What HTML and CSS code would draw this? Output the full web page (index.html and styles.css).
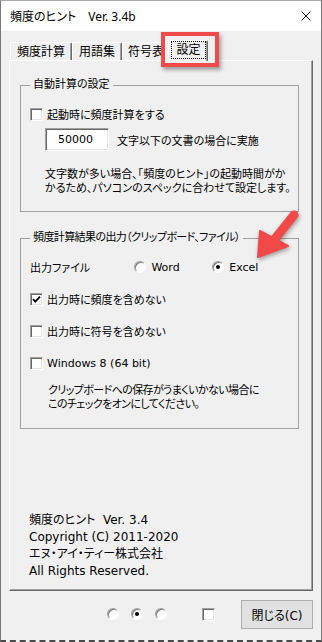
FILE: index.html
```html
<!DOCTYPE html>
<html lang="ja">
<head>
<meta charset="utf-8">
<title>頻度のヒント</title>
<link rel="stylesheet" href="styles.css">
</head>
<body>
<div class="window">
  <header class="titlebar">
    <span class="app-name">頻度のヒント</span><span class="app-ver">Ver. 3.4b</span>
    <svg class="close" width="10" height="10" viewBox="0 0 10 10"><path d="M0.5 0.5 L9.5 9.5 M9.5 0.5 L0.5 9.5" stroke="#111" stroke-width="1" fill="none"/></svg>
  </header>
  <main class="client">
    <nav class="tabs">
      <span class="tab t1">頻度計算</span>
      <span class="tab t2">用語集</span>
      <span class="tab t3">符号表</span>
      <span class="tab active"><span class="focus">設定</span></span>
    </nav>
    <section class="panel">
      <fieldset class="group g1">
        <legend>自動計算の設定</legend>
        <label class="check"><span class="box"></span>起動時に頻度計算をする</label>
        <div class="limit-row"><span class="textbox">50000</span><span>文字以下の文書の場合に実施</span></div>
        <p class="note n1">文字数が多い場合、「頻度のヒント」の起動時間がか<br>かるため、パソコンのスペックに合わせて設定します。</p>
      </fieldset>
      <fieldset class="group g2">
        <legend class="kana-tight">頻度計算結果の出力（クリップボード、ファイル）</legend>
        <div class="out-row">
          <span class="out-label">出力ファイル</span>
          <label class="opt"><span class="radio"></span>Word</label>
          <label class="opt"><span class="radio on"></span>Excel</label>
        </div>
        <label class="check row-gap"><span class="box"><svg width="11" height="11" viewBox="0 0 11 11"><path d="M2 5.2 L4.3 7.6 L9 2.6" stroke="#000" stroke-width="1.8" fill="none"/></svg></span>出力時に頻度を含めない</label>
        <label class="check row-gap"><span class="box"></span>出力時に符号を含めない</label>
        <label class="check row-gap"><span class="box"></span>Windows 8 (64 bit)</label>
        <p class="note n2 kana-tight">クリップボードへの保存がうまくいかない場合に<br>このチェックをオンにしてください。</p>
      </fieldset>
      <div class="about">
        <div>頻度のヒント&nbsp;&nbsp;Ver. 3.4</div>
        <div>Copyright (C) 2011-2020</div>
        <div>エヌ・アイ・ティー株式会社</div>
        <div>All Rights Reserved.</div>
      </div>
    </section>
    <footer class="bottombar">
      <span class="radio"></span>
      <span class="radio on"></span>
      <span class="radio"></span>
      <span class="box bottom-box"></span>
      <button class="btn">閉じる(C)</button>
    </footer>
  </main>
  <div class="highlight"></div>
  <svg class="arrow" width="60" height="60" viewBox="0 0 60 60">
    <line x1="44" y1="10" x2="24" y2="35" stroke="#f14848" stroke-width="9" stroke-linecap="round"/>
    <polygon points="8,52 10,26 38,41" fill="#f14848" stroke="#f14848" stroke-width="2" stroke-linejoin="round"/>
  </svg>
</div>
</body>
</html>
```
FILE: styles.css
```css
* { box-sizing: border-box; }
html, body { margin: 0; padding: 0; }
body {
  width: 322px;
  height: 642px;
  overflow: hidden;
  background: #f0f0f0;
  font-family: "DejaVu Sans", "Noto Sans CJK JP", sans-serif;
  font-size: 11px;
  color: #000;
  font-feature-settings: "palt";
}
.window {
  position: relative;
  width: 322px;
  height: 642px;
  display: flex;
  flex-direction: column;
  border: 1px solid #7a7a7a;
  border-top-color: #a8a8a8;
  border-bottom: 2px dashed #4a4a4a;
  background: #f0f0f0;
}
.titlebar {
  height: 30px;
  flex: none;
  background: #fff;
  display: flex;
  align-items: center;
  padding-left: 9px;
  font-family: "Noto Sans", "Noto Sans CJK JP", sans-serif;
  font-size: 12px;
}
.app-ver { margin-left: 12px; }
.close { margin-left: auto; margin-right: 10px; }

.client {
  flex: 1;
  display: flex;
  flex-direction: column;
  padding: 0 8px;
}
.tabs {
  display: flex;
  align-items: flex-end;
  height: 20px;
  margin-top: 9px;
  padding-left: 1px;
  position: relative;
  z-index: 2;
  font-size: 12px;
}
.tab {
  height: 18px;
  display: flex;
  align-items: center;
  justify-content: center;
  border-top: 1px solid #fff;
  border-left: 1px solid #fff;
  border-right: 1px solid #696969;
  box-shadow: inset -1px 0 0 #a0a0a0;
  border-radius: 2px 2px 0 0;
  background: #f0f0f0;
  line-height: 16px;
}
.t1 { width: 62px; }
.t2 { width: 50px; }
.t3 { width: 48px; }
.tab.active {
  width: 40px;
  height: 21px;
  margin-left: -2px;
  margin-bottom: -1px;
  align-items: flex-start;
  justify-content: flex-start;
  padding: 0 0 0 2px;
}
.focus {
  width: 35px;
  height: 18px;
  display: flex;
  align-items: center;
  justify-content: center;
  outline: 1px dotted #000;
  outline-offset: -1px;
}
.panel {
  height: 531px;
  flex: none;
  display: flex;
  flex-direction: column;
  border-top: 1px solid #fff;
  border-left: 1px solid #fff;
  border-right: 1px solid #696969;
  border-bottom: 1px solid #696969;
  box-shadow: inset -1px -1px 0 #a0a0a0;
  padding: 16px 13px 10px 10px;
  position: relative;
  z-index: 1;
}
.group {
  margin: 0;
  padding: 13px 8px 15px 9px;
  border: 1px solid #a0a0a0;
  min-width: 0;
}
.group legend {
  margin-left: 0;
  padding: 0 3px;
  line-height: 16px;
  white-space: nowrap;
}
.g2 { margin-top: 18px; padding-bottom: 16px; }
.kana-tight { letter-spacing: -0.6px; }

.check {
  display: flex;
  align-items: center;
  height: 16px;
  gap: 4px;
  white-space: nowrap;
}
.row-gap { margin-top: 16px; }
.box {
  width: 13px;
  height: 13px;
  flex: none;
  display: flex;
  align-items: center;
  justify-content: center;
  background: #fff;
  border: 1px solid;
  border-color: #a0a0a0 #fff #fff #a0a0a0;
  box-shadow: inset 1px 1px 0 #696969, inset -1px -1px 0 #e3e3e3;
}
.radio {
  width: 12px;
  height: 12px;
  flex: none;
  border-radius: 50%;
  background: #fff;
  border: 1px solid;
  border-color: #a0a0a0 #fdfdfd #fdfdfd #a0a0a0;
  box-shadow: inset 1px 1px 0 #7a7a7a;
  display: flex;
  align-items: center;
  justify-content: center;
}
.radio.on::after {
  content: "";
  width: 4px;
  height: 4px;
  border-radius: 50%;
  background: #000;
}
.limit-row {
  display: flex;
  align-items: center;
  gap: 8px;
  margin: 6px 0 0 15px;
  white-space: nowrap;
}
.textbox {
  width: 64px;
  height: 23px;
  display: flex;
  align-items: center;
  justify-content: center;
  background: #fff;
  border: 1px solid;
  border-color: #a0a0a0 #fff #fff #a0a0a0;
  box-shadow: inset 1px 1px 0 #696969, inset -1px -1px 0 #e3e3e3;
  padding-right: 3px;
}
.note {
  margin: 0;
  line-height: 14px;
  white-space: nowrap;
}
.n1 { margin: 17px 0 0 15px; }
.n2 { margin: 13px 0 0 18px; }

.out-row {
  display: flex;
  align-items: center;
  height: 16px;
  white-space: nowrap;
}
.out-label { width: 106px; }
.opt {
  width: 79px;
  display: flex;
  align-items: center;
  gap: 5px;
}
.about {
  margin-top: auto;
  margin-left: 9px;
  line-height: 17px;
  font-size: 12px;
}
.bottombar {
  flex: 1;
  display: flex;
  align-items: center;
  justify-content: flex-end;
  padding: 0 0 3px;
  gap: 12px;
}
.bottom-box { margin-left: 23px; }
.btn {
  margin-left: 14px;
  width: 72px;
  height: 29px;
  background: #e1e1e1;
  border: 1px solid #adadad;
  font-family: "DejaVu Sans", "Noto Sans CJK JP", sans-serif;
  font-size: 12px;
  font-feature-settings: "palt";
  color: #000;
  padding: 0;
}
.highlight {
  position: absolute;
  left: 160px;
  top: 31px;
  width: 58px;
  height: 35px;
  border: 4px solid #f04a4a;
  box-shadow: 2px 3px 4px rgba(0, 0, 0, 0.35);
  z-index: 5;
}
.arrow {
  position: absolute;
  left: 249px;
  top: 204px;
  z-index: 5;
  filter: drop-shadow(1px 2px 2px rgba(0, 0, 0, 0.35));
}
```
